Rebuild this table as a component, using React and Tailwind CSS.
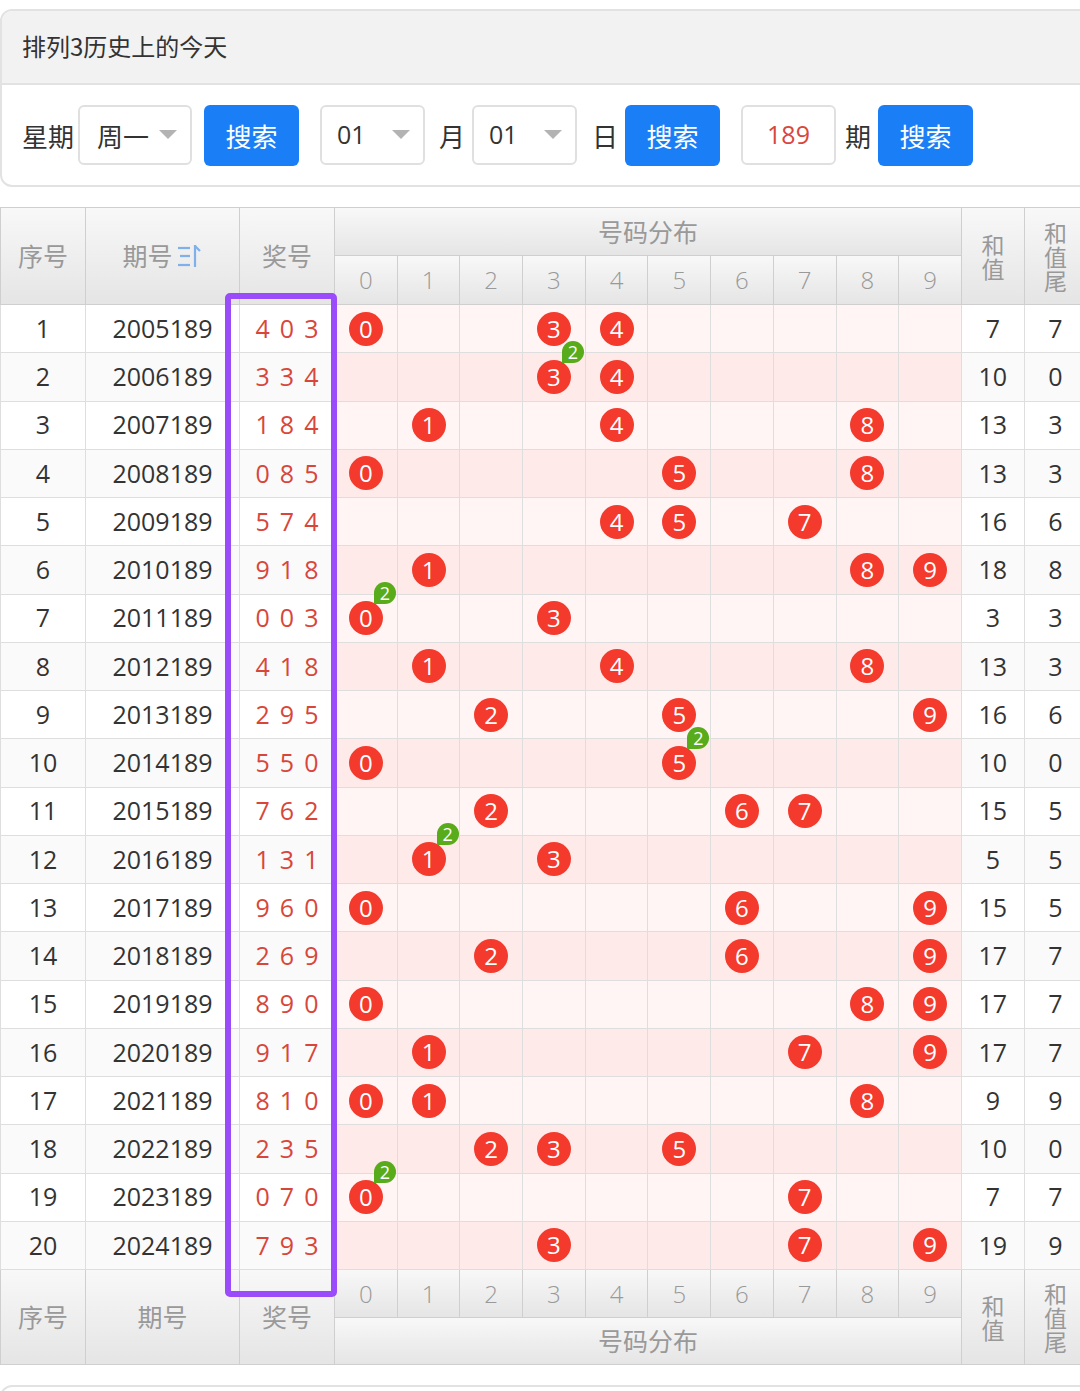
import React from "react";

const rows = [
  [1, "2005189", [4, 0, 3], 7, 7],
  [2, "2006189", [3, 3, 4], 10, 0],
  [3, "2007189", [1, 8, 4], 13, 3],
  [4, "2008189", [0, 8, 5], 13, 3],
  [5, "2009189", [5, 7, 4], 16, 6],
  [6, "2010189", [9, 1, 8], 18, 8],
  [7, "2011189", [0, 0, 3], 3, 3],
  [8, "2012189", [4, 1, 8], 13, 3],
  [9, "2013189", [2, 9, 5], 16, 6],
  [10, "2014189", [5, 5, 0], 10, 0],
  [11, "2015189", [7, 6, 2], 15, 5],
  [12, "2016189", [1, 3, 1], 5, 5],
  [13, "2017189", [9, 6, 0], 15, 5],
  [14, "2018189", [2, 6, 9], 17, 7],
  [15, "2019189", [8, 9, 0], 17, 7],
  [16, "2020189", [9, 1, 7], 17, 7],
  [17, "2021189", [8, 1, 0], 9, 9],
  [18, "2022189", [2, 3, 5], 10, 0],
  [19, "2023189", [0, 7, 0], 7, 7],
  [20, "2024189", [7, 9, 3], 19, 9],
];

const digits = [0, 1, 2, 3, 4, 5, 6, 7, 8, 9];
const cjk = "font-['Noto_Sans_CJK_SC',sans-serif]";
const num = "font-['Open_Sans','Noto_Sans',sans-serif]";
const hdr = "bg-linear-to-b from-[#f8f8f8] to-[#e5e5e5] border-r border-b border-[#cfcfcf] flex items-center justify-center text-[#999]";

function Arrow() {
  return (
    <svg width="18" height="10" viewBox="0 0 18 10" className="shrink-0">
      <polygon points="0,0 18,0 9,9" fill="#b3b3b3" />
    </svg>
  );
}

function SortIcon() {
  return (
    <svg width="26" height="26" viewBox="0 0 26 26" className="ml-[4px]">
      <g stroke="#7fb0ea" strokeWidth="2.2" fill="none">
        <line x1="1" y1="5" x2="13" y2="5" />
        <line x1="3" y1="13" x2="13" y2="13" />
        <line x1="1" y1="22" x2="13" y2="22" />
        <line x1="18" y1="2" x2="18" y2="24" />
        <line x1="18" y1="3" x2="23" y2="8" />
      </g>
    </svg>
  );
}

function Ball({ n, dup }) {
  return (
    <div className={`relative w-[34px] h-[34px] rounded-full bg-[#f33a2c] text-white text-[24px] leading-none flex items-center justify-center ${num}`}>
      {n}
      {dup && (
        <div className="absolute left-[25px] top-[-19px] z-10 w-[22px] h-[22px] rounded-full rounded-bl-none bg-[#58ab1a] text-white text-[18px] leading-none flex items-center justify-center">
          2
        </div>
      )}
    </div>
  );
}

function Btn() {
  return (
    <div className={`h-[61px] w-[95px] rounded-[6px] bg-[#1a7ef6] text-white text-[26px] flex items-center justify-center ${cjk}`}>
      搜索
    </div>
  );
}

function NumSelect() {
  return (
    <div className={`h-[60px] w-[105px] border-2 border-[#e0e0e0] rounded-[6px] flex items-center pl-[15px] gap-[26px] ${num}`}>
      <span className="text-[25px]">01</span>
      <Arrow />
    </div>
  );
}

function StackHead({ chars }) {
  return (
    <div className={`${hdr} row-span-2 flex-col text-[23px] leading-[24px]`}>
      {chars.map((c) => (
        <span key={c}>{c}</span>
      ))}
    </div>
  );
}

export default function App() {
  return (
    <div className={`w-[1080px] h-[1391px] overflow-hidden bg-white ${cjk}`}>
      {/* Search card */}
      <div className="mt-[9px] w-[1100px] border-2 border-[#e2e2e2] rounded-[12px] overflow-hidden">
        <div className="h-[74px] bg-[#f2f2f2] border-b-2 border-[#e2e2e2] flex items-center pl-[20px] pb-[3px] text-[24px] text-[#333]">
          排列3历史上的今天
        </div>
        <div className="h-[100px] flex items-center pl-[20px] text-[26px] text-[#333]">
          <span className="w-[56px]">星期</span>
          <div className="h-[60px] w-[114px] border-2 border-[#e0e0e0] rounded-[6px] bg-white flex items-center pl-[17px] gap-[10px]">
            <span>周一</span>
            <Arrow />
          </div>
          <div className="ml-[12px]"><Btn /></div>
          <div className="ml-[21px]"><NumSelect /></div>
          <span className="ml-[14px] w-[33px]">月</span>
          <NumSelect />
          <span className="ml-[15px] w-[33px]">日</span>
          <Btn />
          <div className={`ml-[21px] h-[60px] w-[95px] border-2 border-[#e0e0e0] rounded-[6px] flex items-center justify-center text-[25px] text-[#d9463b] ${num}`}>
            189
          </div>
          <span className="ml-[9px] w-[33px]">期</span>
          <Btn />
        </div>
      </div>

      {/* Table */}
      <div className="relative mt-[20px] w-[1100px]">
        <div className="grid grid-cols-[86px_154px_95px_repeat(10,62.7px)_63px_62px] grid-rows-[48px_49px_repeat(20,48.25px)_48px_47px] border-t border-[#cfcfcf]">
          {/* header */}
          <div className={`${hdr} row-span-2 border-l text-[25px]`}>序号</div>
          <div className={`${hdr} row-span-2 text-[25px] text-[#6fa6e8]`}>
            <span>期号</span>
            <SortIcon />
          </div>
          <div className={`${hdr} row-span-2 text-[25px]`}>奖号</div>
          <div className={`${hdr} col-span-10 text-[25px]`}>号码分布</div>
          <StackHead chars={["和", "值"]} />
          <StackHead chars={["和", "值", "尾"]} />
          {digits.map((d) => (
            <div key={"h" + d} className={`${hdr} text-[24px] font-light ${num}`}>{d}</div>
          ))}

          {/* rows */}
          {rows.map(([i, issue, nums, sum, tail], idx) => {
            const even = idx % 2 === 1;
            const lbg = even ? "bg-[#fafafa]" : "bg-white";
            const dbg = even ? "bg-[#ffeaea]" : "bg-[#fff5f5]";
            const cell = `border-r border-b border-[#dedede] flex items-center justify-center text-[25px] text-[#333] ${num}`;
            return (
              <React.Fragment key={i}>
                <div className={`${cell} ${lbg} border-l`}>{i}</div>
                <div className={`${cell} ${lbg}`}>{issue}</div>
                <div className={`${cell} ${lbg} text-[#d8463a] gap-[10px]`}>
                  {nums.map((n, k) => <span key={k}>{n}</span>)}
                </div>
                {digits.map((d) => {
                  const c = nums.filter((x) => x === d).length;
                  return (
                    <div key={d} className={`${cell} ${dbg}`}>
                      {c > 0 && <Ball n={d} dup={c > 1} />}
                    </div>
                  );
                })}
                <div className={`${cell} ${lbg}`}>{sum}</div>
                <div className={`${cell} ${lbg}`}>{tail}</div>
              </React.Fragment>
            );
          })}

          {/* footer */}
          <div className={`${hdr} row-span-2 border-l text-[25px]`}>序号</div>
          <div className={`${hdr} row-span-2 text-[25px]`}>期号</div>
          <div className={`${hdr} row-span-2 text-[25px]`}>奖号</div>
          {digits.map((d) => (
            <div key={"f" + d} className={`${hdr} text-[24px] font-light ${num}`}>{d}</div>
          ))}
          <StackHead chars={["和", "值"]} />
          <StackHead chars={["和", "值", "尾"]} />
          <div className={`${hdr} col-span-10 text-[25px]`}>号码分布</div>
        </div>

        {/* highlight box */}
        <div className="absolute left-[225px] top-[86px] w-[112px] h-[1004px] border-[6px] border-[#9b4cfa] rounded-[5px] pointer-events-none z-20" />
      </div>

      <div className="mt-[20px] w-[1100px] h-[30px] border-2 border-[#e2e2e2] rounded-[12px]" />
    </div>
  );
}
